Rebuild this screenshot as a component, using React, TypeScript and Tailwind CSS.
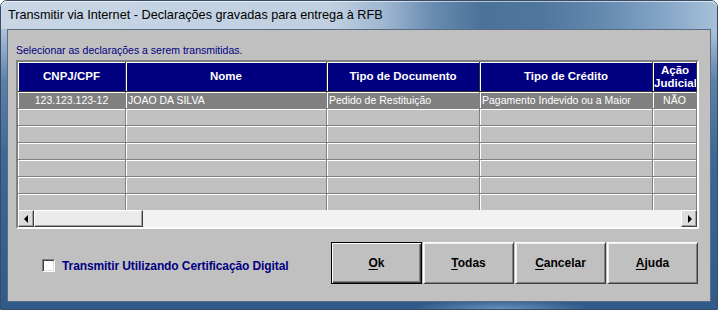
const colW = ["w-[108px]", "w-[201px]", "w-[153px]", "w-[173px]", "w-[44px]"];

const headCell =
  "flex h-full shrink-0 items-center overflow-hidden border-r border-b border-[#303030] bg-[#000080] shadow-[inset_1px_1px_0_#ffffff] text-white font-bold text-[11.5px] leading-[13px]";
const bodyCell =
  "flex h-full shrink-0 items-center overflow-hidden border-r border-b border-[#808080] shadow-[inset_1px_1px_0_#ffffff] text-[10.5px] leading-[13px]";

function Header() {
  const titles = ["CNPJ/CPF", "Nome", "Tipo de Documento", "Tipo de Crédito"];
  return (
    <div className="flex h-[30px] shrink-0">
      {titles.map((t, i) => (
        <div key={t} className={`${headCell} ${colW[i]}`}>
          <div className="w-full text-center">{t}</div>
        </div>
      ))}
      <div className={`${headCell} ${colW[4]}`}>
        <div className="w-full pl-[1px] text-center">
          Ação
          <br />
          Judicial
        </div>
      </div>
    </div>
  );
}

function DataRow() {
  return (
    <div className="flex h-[17px] shrink-0 bg-[#808080] text-white">
      <div className={`${bodyCell} ${colW[0]}`}>
        <div className="w-full text-center">123.123.123-12</div>
      </div>
      <div className={`${bodyCell} ${colW[1]} pl-[2px]`}>JOAO DA SILVA</div>
      <div className={`${bodyCell} ${colW[2]} pl-[2px]`}>Pedido de Restituição</div>
      <div className={`${bodyCell} ${colW[3]} pl-[2px]`}>Pagamento Indevido ou a Maior</div>
      <div className={`${bodyCell} ${colW[4]}`}>
        <div className="w-full text-center">NÃO</div>
      </div>
    </div>
  );
}

function EmptyRow() {
  return (
    <div className="flex h-[17px] shrink-0 bg-[#c0c0c0]">
      {colW.map((w) => (
        <div key={w} className={`${bodyCell} ${w}`} />
      ))}
    </div>
  );
}

function ArrowBtn({ dir }: { dir: "left" | "right" }) {
  return (
    <div className="flex h-[17px] w-[16px] shrink-0 items-center justify-center border border-t-white border-l-white border-b-[#404040] border-r-[#404040] bg-[#dcdcdc] shadow-[inset_-1px_-1px_0_#a0a0a0]">
      <svg width="5" height="8" viewBox="0 0 5 8">
        {dir === "left" ? <path d="M4 0 L0 4 L4 8 Z" fill="#000" /> : <path d="M1 0 L5 4 L1 8 Z" fill="#000" />}
      </svg>
    </div>
  );
}

function Button({ label, rest, def }: { label: string; rest: string; def?: boolean }) {
  const frame = def
    ? "border border-black shadow-[inset_1px_1px_0_#ffffff,inset_-1px_-1px_0_#404040,inset_-2px_-2px_0_#808080]"
    : "border border-t-white border-l-white border-b-[#404040] border-r-[#404040] shadow-[inset_1px_1px_0_#ececec,inset_-1px_-1px_0_#808080]";
  return (
    <div className={`flex h-[42px] w-[91px] items-center justify-center bg-[#c0c0c0] text-[12px] font-bold text-black ${frame}`}>
      <span>
        <span className="underline underline-offset-[2px]">{label}</span>
        {rest}
      </span>
    </div>
  );
}

export default function App() {
  return (
    <div className="h-[310px] w-[718px] bg-white font-['Liberation_Sans',Arial,sans-serif]">
      <div className="flex h-full w-full flex-col rounded-t-[7px] border border-[#3a4c63] bg-[radial-gradient(ellipse_90px_10px_at_500px_100%,#6690bd,transparent),linear-gradient(to_bottom,#c3d3e4_0px,#a9bfd6_32px,#5b81aa_80px,#3c6796_160px,#2f5a8b_100%)]">
        {/* title bar */}
        <div className="flex h-[28px] shrink-0 items-center rounded-t-[6px] bg-[linear-gradient(to_right,#c8d6e5_0px,#c0d0e1_330px,#9db6d0_385px,#6a8db2_430px,#4b7299_480px,#4f769d_540px,#6389af_600px,#83a4c5_660px,#a8c1d9_718px)] pl-[7px] shadow-[inset_0_1px_0_rgba(255,255,255,0.6)]">
          <span className="text-[12.7px] leading-none text-black">
            Transmitir via Internet - Declarações gravadas para entrega à RFB
          </span>
        </div>

        {/* client area */}
        <div className="mx-[6px] mb-[7px] flex flex-1 flex-col border border-[#5a6c82] bg-[#c0c0c0]">
          <div className="pl-[8px] pt-[14px] text-[10.5px] leading-[13px] text-[#000080]">
            Selecionar as declarações a serem transmitidas.
          </div>

          {/* grid */}
          <div className="ml-[8px] mt-[3px] flex h-[169px] w-[683px] flex-col border-2 border-t-[#808080] border-l-[#808080] border-b-white border-r-white shadow-[inset_1px_1px_0_#404040]">
            <div className="flex flex-1 flex-col overflow-hidden">
              <Header />
              <DataRow />
              <EmptyRow />
              <EmptyRow />
              <EmptyRow />
              <EmptyRow />
              <EmptyRow />
              <EmptyRow />
              <EmptyRow />
            </div>
            <div className="flex h-[17px] shrink-0 bg-[#f2f2f2]">
              <ArrowBtn dir="left" />
              <div className="h-[17px] w-[109px] border border-t-white border-l-white border-b-[#404040] border-r-[#404040] bg-[#ebebeb] shadow-[inset_-1px_-1px_0_#a0a0a0]" />
              <div className="flex-1" />
              <ArrowBtn dir="right" />
            </div>
          </div>

          {/* bottom */}
          <div className="flex flex-1 items-start justify-between pl-[34px] pr-[12px] pt-[13px]">
            <div className="mt-[15px] flex h-[17px] items-center gap-[7px]">
              <div className="h-[13px] w-[13px] border border-t-[#808080] border-l-[#808080] border-b-white border-r-white bg-white shadow-[inset_1px_1px_0_#404040,inset_-1px_-1px_0_#dfdfdf]" />
              <span className="text-[12px] font-bold tracking-[-0.1px] text-[#000080]">
                Transmitir Utilizando Certificação Digital
              </span>
            </div>
            <div className="flex gap-[1px]">
              <Button label="O" rest="k" def />
              <Button label="T" rest="odas" />
              <Button label="C" rest="ancelar" />
              <Button label="A" rest="juda" />
            </div>
          </div>
        </div>
      </div>
    </div>
  );
}
